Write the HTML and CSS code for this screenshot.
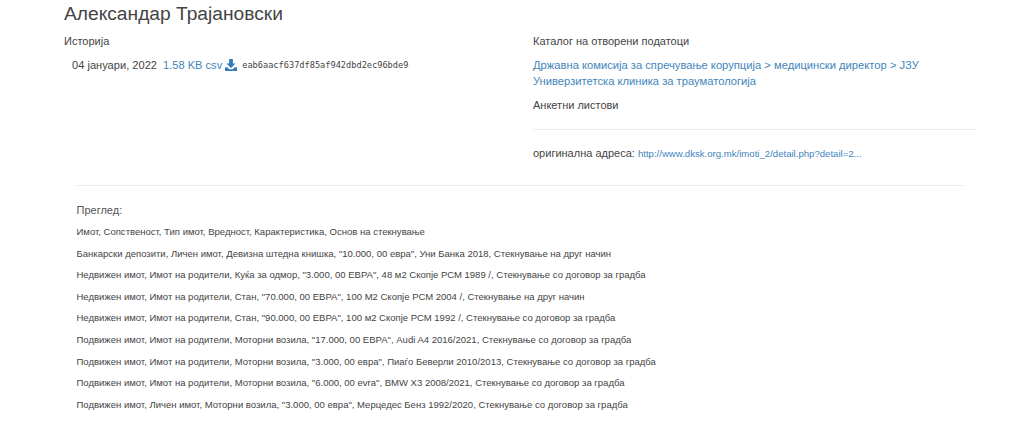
FILE: index.html
```html
<!DOCTYPE html>
<html lang="mk">
<head>
    <meta charset="UTF-8">
    <title>Александар Трајановски</title>
    <link rel="stylesheet" href="styles.css">
</head>
<body>
    <h1>Александар Трајановски</h1>

    <div class="columns">
        <div class="col-left">
            <div class="label">Историја</div>
            <div class="history-row">
                <span class="date">04 јануари, 2022</span>
                <a href="#">1.58 KB csv</a>
                <svg class="download" viewBox="0 0 16 16" width="12" height="12"><path d="M5.500 0h5v6h3.500L8 12 2 6h3.500z M0 11h3l2.500 2.500h5L13 11h3v5H0z"/></svg>
                <span class="hash">eab6aacf637df85af942dbd2ec96bde9</span>
            </div>
        </div>
        <div class="col-right">
            <div class="label">Каталог на отворени податоци</div>
            <a class="breadcrumb" href="#">Државна комисија за спречување корупција &gt; медицински директор &gt; ЈЗУ Универзитетска клиника за трауматологија</a>
            <div class="label survey">Анкетни листови</div>
            <hr class="rule-right">
            <div class="source">оригинална адреса: <a href="#">http://www.dksk.org.mk/imoti_2/detail.php?detail=2...</a></div>
        </div>
    </div>

    <hr class="rule-main">

    <div class="preview">
        <div class="preview-title">Преглед:</div>
        <p>Имот, Сопственост, Тип имот, Вредност, Карактеристика, Основ на стекнување</p>
        <p>Банкарски депозити, Личен имот, Девизна штедна книшка, "10.000, 00 евра", Уни Банка 2018, Стекнување на друг начин</p>
        <p>Недвижен имот, Имот на родители, Куќа за одмор, "3.000, 00 ЕВРА", 48 м2 Скопје РСМ 1989 /, Стекнување со договор за градба</p>
        <p>Недвижен имот, Имот на родители, Стан, "70.000, 00 ЕВРА", 100 М2 Скопје РСМ 2004 /, Стекнување на друг начин</p>
        <p>Недвижен имот, Имот на родители, Стан, "90.000, 00 ЕВРА", 100 м2 Скопје РСМ 1992 /, Стекнување со договор за градба</p>
        <p>Подвижен имот, Имот на родители, Моторни возила, "17.000, 00 ЕВРА", Audi A4 2016/2021, Стекнување со договор за градба</p>
        <p>Подвижен имот, Имот на родители, Моторни возила, "3.000, 00 евра", Пиаѓо Беверли 2010/2013, Стекнување со договор за градба</p>
        <p>Подвижен имот, Имот на родители, Моторни возила, "6.000, 00 evra", BMW X3 2008/2021, Стекнување со договор за градба</p>
        <p>Подвижен имот, Личен имот, Моторни возила, "3.000, 00 евра", Мерцедес Бенз 1992/2020, Стекнување со договор за градба</p>
    </div>
</body>
</html>
```

FILE: styles.css
```css
body {
    font-family: "Liberation Sans", Arial, sans-serif;
    color: #444;
    background-color: #fff;
    margin: 0;
    padding: 0 47px 0 64px;
    font-size: 11px;
    overflow: hidden;
}

a {
    color: #4285bb;
    text-decoration: none;
}

h1 {
    font-size: 19.200px;
    font-weight: 400;
    line-height: 20px;
    margin: 0;
    padding-top: 4px;
}

.columns {
    display: grid;
    grid-template-columns: 469px 1fr;
    margin-top: 11px;
}

.label {
    line-height: 12px;
}

.history-row {
    display: flex;
    align-items: center;
    margin: 11px 0 0 8px;
    line-height: 14px;
    font-size: 11.100px;
}

.history-row a {
    margin-left: 6px;
}

.download {
    fill: #337ab7;
    margin-left: 3px;
}

.hash {
    font-family: "DejaVu Sans Mono", monospace;
    font-size: 8.650px;
    margin-left: 5px;
}

.breadcrumb {
    display: block;
    font-size: 11.200px;
    line-height: 16.500px;
    margin-top: 9.500px;
    max-width: 400px;
}

.survey {
    margin-top: 9px;
}

.rule-right {
    border: 0;
    border-top: 1px solid #eee;
    margin: 18px 0 0;
}

.source {
    margin-top: 17px;
    line-height: 13px;
}

.source a {
    font-size: 9.600px;
}

.rule-main {
    border: 0;
    border-top: 1px solid #eee;
    margin: 25px 12px 0;
}

.preview {
    padding: 17px 0 0 12.500px;
}

.preview-title {
    font-size: 11px;
    line-height: 14px;
    color: #555;
}

.preview p {
    font-size: 9.520px;
    line-height: 12px;
    margin: 9.600px 0 0;
}
```
